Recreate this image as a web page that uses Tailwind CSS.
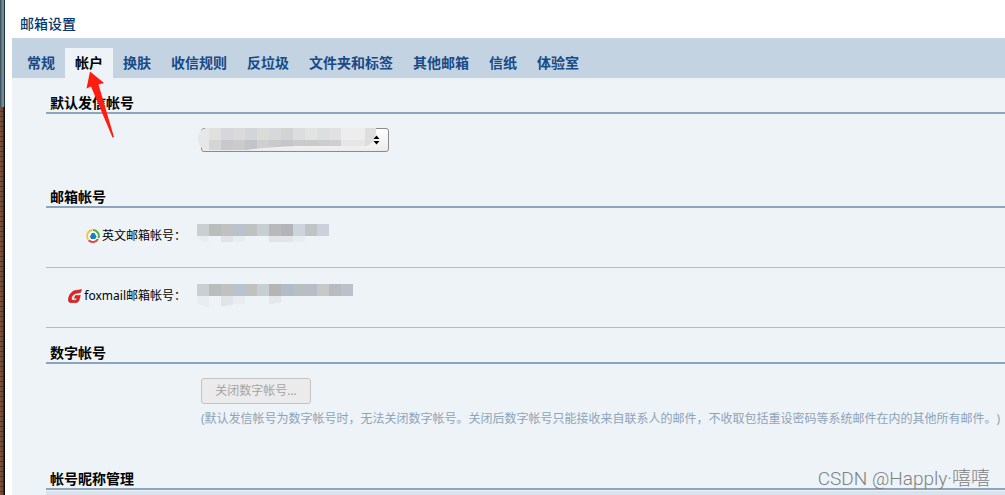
<!DOCTYPE html>
<html lang="zh-CN">
<head>
<meta charset="utf-8">
<title>邮箱设置</title>
<script src="https://cdn.jsdelivr.net/npm/@tailwindcss/browser@4"></script>
</head>
<body class="relative flex h-screen overflow-hidden bg-white font-['Noto_Sans','Noto_Sans_CJK_SC',sans-serif] text-xs text-black [text-spacing-trim:space-all]">

<!-- desktop edge behind the window -->
<div class="flex w-[5px] shrink-0 flex-col" aria-hidden="true">
  <div class="h-[107px] bg-[linear-gradient(90deg,#35424a_0px,#6b8792_2px,#7590a0_4px,#1d3440_4px)]"></div>
  <div class="flex-1 bg-[repeating-linear-gradient(180deg,#00000000_0px,#00000000_4px,#1a0e0866_4px,#1a0e0866_5px),linear-gradient(90deg,#7b5138_0px,#6c4632_3px,#0c0807_4px)]"></div>
</div>

<div class="flex min-w-0 flex-1 flex-col pl-[7px]">
  <h1 class="flex h-[38px] shrink-0 items-center px-2 pt-[10px] text-sm font-medium text-[#08376f]">邮箱设置</h1>

  <nav class="flex h-10 shrink-0 items-end bg-[#c3d3e2] pl-[5px] text-sm font-bold whitespace-nowrap text-[#174a86]">
    <a href="#" class="flex h-[30px] items-center px-[10px]">常规</a>
    <a href="#" aria-current="page" class="flex h-[30px] items-center bg-[#edf3f6] px-[10px] text-black">帐户</a>
    <a href="#" class="flex h-[30px] items-center px-[10px]">换肤</a>
    <a href="#" class="flex h-[30px] items-center px-[10px]">收信规则</a>
    <a href="#" class="flex h-[30px] items-center px-[10px]">反垃圾</a>
    <a href="#" class="flex h-[30px] items-center px-[10px]">文件夹和标签</a>
    <a href="#" class="flex h-[30px] items-center px-[10px]">其他邮箱</a>
    <a href="#" class="flex h-[30px] items-center px-[10px]">信纸</a>
    <a href="#" class="flex h-[30px] items-center px-[10px]">体验室</a>
  </nav>

  <main class="flex-1 bg-[#edf3f6] pl-[34px]">
    <section>
      <h2 id="sender" class="flex h-9 items-end border-b-2 border-[#8ca4bc] px-1 text-sm/[18px] font-bold">默认发信帐号</h2>
      <div class="h-[58px] pt-[14px] pl-[155px]">
        <div class="relative w-[188px]">
          <select aria-labelledby="sender" class="block h-6 w-full appearance-none rounded-[3px] border border-[#8b8b8b] bg-linear-to-b from-white to-[#ececec] px-2"><option></option></select>
          <svg class="pointer-events-none absolute top-0 -left-[3px]" width="188" height="24" viewBox="0 0 188 24" aria-hidden="true" shape-rendering="crispEdges">
            <clipPath id="m"><path d="M8 0H178Q179 7 175 14Q171 17 169 18L98 18Q70 19 48 22H8Q0 20 0 11Q0 2 8 0Z"/></clipPath>
            <g clip-path="url(#m)">
              <path fill="#e5e7e9" d="M0 0h11v24H0z"/><path fill="#e0e0df" d="M11 0h12v12H11z"/><path fill="#d3d5d7" d="M11 12h12v12H11z"/>
              <path fill="#d6d6dc" d="M23 0h12v12H23z"/><path fill="#c9c8cc" d="M23 12h12v12H23z"/>
              <path fill="#dad9db" d="M35 0h12v12H35z"/><path fill="#cbcbcd" d="M35 12h12v12H35z"/>
              <path fill="#d3d6d8" d="M47 0h12v12H47z"/><path fill="#c3c3ca" d="M47 12h12v12H47z"/>
              <path fill="#dbdbd8" d="M59 0h12v12H59z"/><path fill="#cfcfd1" d="M59 12h12v12H59z"/>
              <path fill="#d7d7de" d="M71 0h12v12H71z"/><path fill="#cacacb" d="M71 12h12v12H71z"/>
              <path fill="#d2d3d3" d="M83 0h12v12H83z"/><path fill="#c5c6c9" d="M83 12h12v12H83z"/>
              <path fill="#dcdddd" d="M95 0h12v12H95z"/><path fill="#cbcbcf" d="M95 12h12v12H95z"/>
              <path fill="#e3e3e1" d="M107 0h12v12h-12z"/><path fill="#cacaca" d="M107 12h12v12h-12z"/>
              <path fill="#dbdfde" d="M119 0h12v12h-12z"/><path fill="#cccdcd" d="M119 12h12v12h-12z"/>
              <path fill="#e1e1e3" d="M131 0h12v12h-12z"/><path fill="#cfced5" d="M131 12h12v12h-12z"/>
              <path fill="#ededed" d="M143 0h24v12h-24z"/><path fill="#e6e6e6" d="M143 12h24v12h-24z"/>
              <path fill="#dedede" d="M167 0h12v24h-12z"/>
            </g>
            <path shape-rendering="auto" d="M175.5 11l3-3.5 3 3.5zM175.5 13h6l-3 3.5z"/>
          </svg>
        </div>
      </div>
    </section>

    <section>
      <h2 class="flex h-9 items-end border-b-2 border-[#8ca4bc] px-1 text-sm/[18px] font-bold">邮箱帐号</h2>
      <dl>
        <div class="flex h-[60px] border-b border-[#adbccc]">
          <dt class="flex h-14 w-[140px] items-center justify-end gap-[2px] whitespace-nowrap">
            <svg width="14" height="14" viewBox="0 0 14 14" aria-hidden="true">
              <circle cx="7" cy="7" r="6.5" fill="#fff"/>
              <g fill="none" stroke-width="2"><path d="M2.3 10.5A6 6 0 0 1 6.5 1" stroke="#f2c63a"/><path d="M7 1A6 6 0 0 1 12.5 9" stroke="#4fae3c"/><path d="M12 10A6 6 0 0 1 2.6 11.2" stroke="#e5463f"/></g>
              <path d="M7.2 3.8Q9.6 3.8 9.8 6.4L10.8 7.8L9.8 8.8L9.4 10H5L4.6 8.8L3.6 7.8L4.6 6.4Q4.8 3.8 7.2 3.8Z" fill="#1482bd"/>
            </svg>
            <span>英文邮箱帐号：</span>
          </dt>
          <dd class="pt-4 pl-[11px]">
            <svg width="156" height="24" viewBox="0 0 156 24" shape-rendering="crispEdges" role="img" aria-label="已隐藏">
              <path fill="#cbcfd2" d="M0 0h12v12H0z"/><path fill="#b8bebc" d="M12 0h12v12H12z"/><path fill="#c1c1c3" d="M24 0h12v12H24z"/><path fill="#b9c3cf" d="M36 0h12v12H36z"/><path fill="#c0c1c1" d="M48 0h12v12H48z"/><path fill="#c6cfd1" d="M60 0h12v12H60z"/><path fill="#b9b9bb" d="M72 0h12v12H72z"/><path fill="#b3b4b9" d="M84 0h12v12H84z"/><path fill="#ccd4de" d="M96 0h12v12H96z"/><path fill="#c0c4c5" d="M108 0h12v12h-12z"/><path fill="#ccd0da" d="M120 0h12v12h-12z"/>
              <path fill="#e8edf0" d="M0 12h12v6H8Q3 17 0 12zM36 12h12v6H36zM96 12h12v6H96z"/><path fill="#e1e5e8" d="M24 12h12v6H24zM72 12h24v6H72z"/>
            </svg>
          </dd>
        </div>
        <div class="flex h-[60px] border-b border-[#adbccc]">
          <dt class="flex h-14 w-[140px] items-center justify-end gap-[2px] whitespace-nowrap">
            <svg width="14" height="14" viewBox="0 0 14 14" aria-hidden="true">
              <path d="M13.6 0.4L12.4 3.6L7.4 4.4Q4.2 5.6 3.4 8.6Q3.2 10.8 4.6 11.2H8.2L9.2 9.2H6.4L7.4 6.4H12.4L10.8 12L8.6 13.8H2.2Q0 13 0.4 9.6Q1.2 5 4.8 2.4Q6.6 1.2 10 1.2Z" fill="#e9201f" stroke="#a81414" stroke-width=".5"/>
            </svg>
            <span>foxmail邮箱帐号：</span>
          </dt>
          <dd class="pt-4 pl-[11px]">
            <svg width="156" height="24" viewBox="0 0 156 24" shape-rendering="crispEdges" role="img" aria-label="已隐藏">
              <path fill="#cbcfd2" d="M0 0h12v12H0z"/><path fill="#b8bebc" d="M12 0h12v12H12z"/><path fill="#c1c1c3" d="M24 0h12v12H24z"/><path fill="#b9c3cf" d="M36 0h12v12H36z"/><path fill="#c0c1c1" d="M48 0h12v12H48z"/><path fill="#c6cfd1" d="M60 0h12v12H60z"/><path fill="#b5b5b5" d="M72 0h12v12H72z"/><path fill="#b2bcc6" d="M84 0h12v12H84z"/><path fill="#b9bfc0" d="M96 0h12v12H96z"/><path fill="#b9bec6" d="M108 0h12v12h-12z"/><path fill="#c7c8c9" d="M120 0h12v12h-12z"/><path fill="#b8bbc1" d="M132 0h12v12h-12z"/><path fill="#bbc0ca" d="M144 0h12v12h-12z"/>
              <path fill="#e8edf0" d="M0 12h12v11Q2 22 0 18zM36 12h12v8H36z"/><path fill="#e1e5e8" d="M24 12h12v9l-12 1z"/><path fill="#e4e8ea" d="M72 12h12v7l-12 1z"/>
            </svg>
          </dd>
        </div>
      </dl>
    </section>

    <section>
      <h2 class="flex h-9 items-end border-b-2 border-[#8ca4bc] px-1 text-sm/[18px] font-bold">数字帐号</h2>
      <div class="h-[90px] pt-[14px] pl-[155px]">
        <button type="button" disabled class="block h-[26px] w-[110px] rounded-[3px] border border-[#c3c3c3] bg-[#ebebeb] text-[#a5a5a5]">关闭数字帐号...</button>
        <p class="mt-[7px] whitespace-nowrap text-[#8fa3b9]">(默认发信帐号为数字帐号时，无法关闭数字帐号。关闭后数字帐号只能接收来自联系人的邮件，不收取包括重设密码等系统邮件在内的其他所有邮件。)</p>
      </div>
    </section>

    <section>
      <h2 class="flex h-9 items-end border-b-2 border-[#8ca4bc] px-1 text-sm/[18px] font-bold">帐号昵称管理</h2>
      <div class="mt-px h-4 bg-[#d9e3ed]"></div>
    </section>
  </main>
</div>

<!-- pointer to the active tab -->
<svg class="absolute top-[71px] left-[85px]" width="31" height="68" viewBox="0 0 31 68" aria-hidden="true"><path fill="#ff1d12" d="M5 0.5L19 12L13.5 13.5L29 66L27.5 66.5L6 15.5L1.5 17.5Z"/></svg>

<p class="absolute right-[15px] bottom-1 font-[Roboto,'Noto_Sans_CJK_SC',sans-serif] text-[19px] font-light text-[#7e8184]">CSDN @Happly·嘻嘻</p>
</body>
</html>
